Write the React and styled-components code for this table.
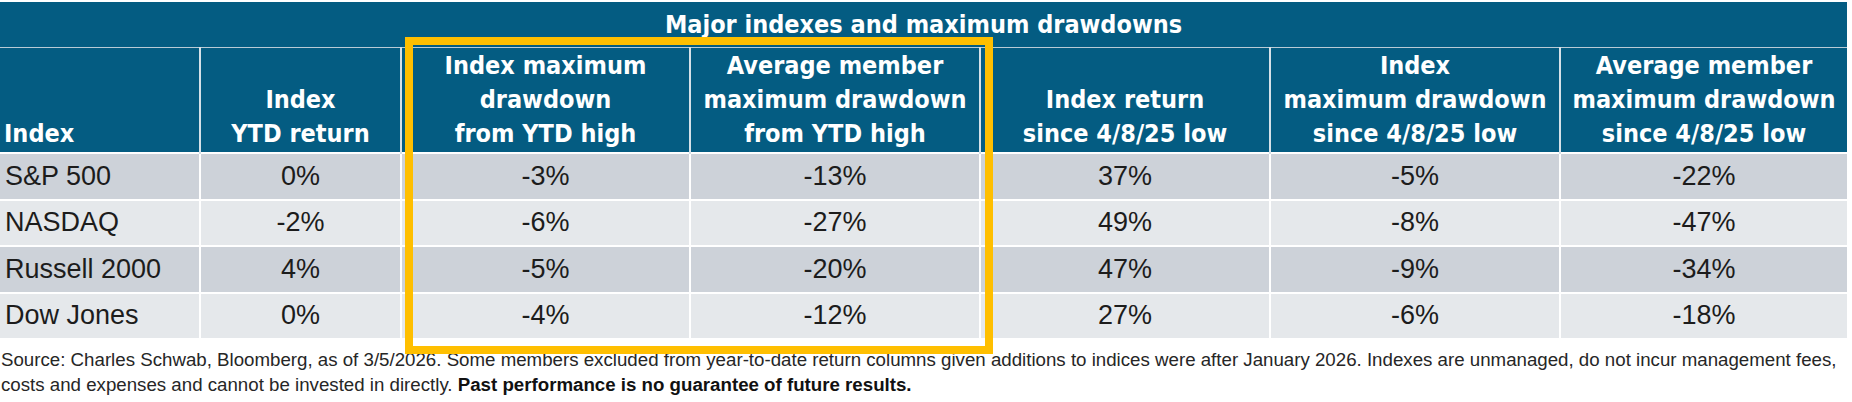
import React from "react";
import styled, { createGlobalStyle } from "styled-components";

const GlobalStyle = createGlobalStyle`
  html, body { margin: 0; padding: 0; background: #ffffff; }
  body { font-family: "Liberation Sans", Arial, sans-serif; }
`;

const TEAL = "#045c82";
const YELLOW = "#ffbf00";

const Page = styled.div`
  width: 1852px;
  padding-top: 2px;
`;

const TableWrap = styled.div`
  position: relative;
  width: 1847px;
`;

const Table = styled.table`
  width: 1847px;
  border-collapse: collapse;
  table-layout: fixed;
`;

const TitleCell = styled.th`
  background: ${TEAL};
  color: #ffffff;
  height: 45px;
  padding: 0;
  font-family: "DejaVu Sans Condensed", "DejaVu Sans", sans-serif;
  font-stretch: condensed;
  font-weight: 700;
  font-size: 25px;
  text-align: center;
  vertical-align: middle;
`;

const HeadCell = styled.th`
  background: ${TEAL};
  color: #ffffff;
  height: 103px;
  padding: 0 ${(p) => (p.$left ? "4px" : "2px")} 1px;
  border-top: 1px solid #b9cbd6;
  border-left: ${(p) => (p.$first ? "none" : "2px solid #d6e1e8")};
  font-family: "DejaVu Sans Condensed", "DejaVu Sans", sans-serif;
  font-stretch: condensed;
  font-weight: 700;
  font-size: 25px;
  line-height: 34px;
  text-align: ${(p) => (p.$left ? "left" : "center")};
  vertical-align: bottom;
  white-space: nowrap;
`;

const Row = styled.tr`
  background: ${(p) => (p.$alt ? "#e5e8eb" : "#cdd2d9")};
`;

const Cell = styled.td`
  height: 44.5px;
  padding: 0 ${(p) => (p.$left ? "5px" : "0")};
  border-top: 2px solid #ffffff;
  border-left: ${(p) => (p.$first ? "none" : "2px solid #ffffff")};
  color: #1c1c1c;
  font-family: "Liberation Sans", Arial, sans-serif;
  font-size: 27px;
  text-align: ${(p) => (p.$left ? "left" : "center")};
  vertical-align: middle;
  white-space: nowrap;
`;

const Highlight = styled.div`
  position: absolute;
  left: 405px;
  top: 35px;
  width: 588px;
  height: 317px;
  box-sizing: border-box;
  border: 8px solid ${YELLOW};
  pointer-events: none;
`;

const Footnote = styled.p`
  margin: 9px 0 0 1px;
  color: #262626;
  font-family: "Liberation Sans", Arial, sans-serif;
  font-size: 18.7px;
  line-height: 25px;
  white-space: nowrap;
`;

const Strong = styled.b`
  font-weight: 700;
  color: #111;
`;

const widths = [200, 201, 289, 290, 290, 290, 287];

const headers = [
  ["Index"],
  ["Index", "YTD return"],
  ["Index maximum", "drawdown", "from YTD high"],
  ["Average member", "maximum drawdown", "from YTD high"],
  ["Index return", "since 4/8/25 low"],
  ["Index", "maximum drawdown", "since 4/8/25 low"],
  ["Average member", "maximum drawdown", "since 4/8/25 low"],
];

const rows = [
  ["S&P 500", "0%", "-3%", "-13%", "37%", "-5%", "-22%"],
  ["NASDAQ", "-2%", "-6%", "-27%", "49%", "-8%", "-47%"],
  ["Russell 2000", "4%", "-5%", "-20%", "47%", "-9%", "-34%"],
  ["Dow Jones", "0%", "-4%", "-12%", "27%", "-6%", "-18%"],
];

export default function App() {
  return (
    <Page>
      <GlobalStyle />
      <TableWrap>
        <Table>
          <colgroup>
            {widths.map((w, i) => (
              <col key={i} style={{ width: w }} />
            ))}
          </colgroup>
          <thead>
            <tr>
              <TitleCell colSpan={7}>Major indexes and maximum drawdowns</TitleCell>
            </tr>
            <tr>
              {headers.map((lines, i) => (
                <HeadCell key={i} $first={i === 0} $left={i === 0}>
                  {lines.map((l, j) => (
                    <React.Fragment key={j}>
                      {j > 0 && <br />}
                      {l}
                    </React.Fragment>
                  ))}
                </HeadCell>
              ))}
            </tr>
          </thead>
          <tbody>
            {rows.map((r, ri) => (
              <Row key={ri} $alt={ri % 2 === 1}>
                {r.map((v, ci) => (
                  <Cell key={ci} $first={ci === 0} $left={ci === 0}>
                    {v}
                  </Cell>
                ))}
              </Row>
            ))}
          </tbody>
        </Table>
        <Highlight />
      </TableWrap>
      <Footnote>
        Source: Charles Schwab, Bloomberg, as of 3/5/2026. Some members excluded from year-to-date return columns given additions to indices were after January 2026. Indexes are unmanaged, do not incur management fees,
        <br />
        costs and expenses and cannot be invested in directly. <Strong>Past performance is no guarantee of future results.</Strong>
      </Footnote>
    </Page>
  );
}
